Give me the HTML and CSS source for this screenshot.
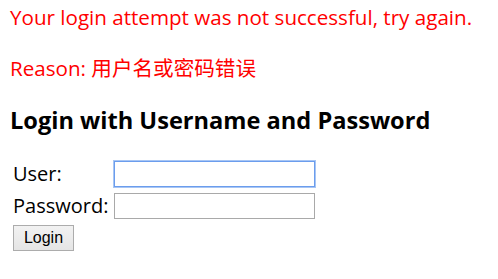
FILE: index.html
```html
<!DOCTYPE html>
<html lang="en">
<head>
<meta charset="utf-8">
<title>Login Page</title>
<link rel="stylesheet" href="styles.css">
</head>
<body>
<div class="page">
  <div class="error">
    <div class="line">Your login attempt was not successful, try again.</div>
    <div class="line gap">Reason: 用户名或密码错误</div>
  </div>
  <h3 class="title">Login with Username and Password</h3>
  <form class="form">
    <label class="label" for="u">User:</label>
    <input class="field focused" id="u" type="text">
    <label class="label" for="p">Password:</label>
    <input class="field" id="p" type="password">
    <div class="actions"><button class="btn" type="button">Login</button></div>
  </form>
</div>
</body>
</html>
```
FILE: styles.css
```css
html, body {
  margin: 0;
  padding: 0;
  background: #ffffff;
}
.page {
  padding: 0 0 0 10px;
  font-family: "Open Sans", "Noto Sans CJK SC", sans-serif;
  font-size: 20.6px;
  color: #000;
}
.error {
  color: #ff0000;
  padding-top: 4px;
}
.line {
  line-height: 26px;
}
.gap {
  margin-top: 25px;
}
.title {
  margin: 24px 0 0 0;
  font-size: 23.6px;
  line-height: 30px;
  font-weight: bold;
}
.form {
  margin-top: 26px;
  display: grid;
  grid-template-columns: max-content 201px;
  justify-content: start;
  column-gap: 6px;
  row-gap: 6px;
  align-items: center;
  padding-left: 3px;
}
.label {
  font-size: 20px;
  line-height: 26px;
}
.field {
  box-sizing: border-box;
  width: 201px;
  height: 26px;
  margin: 0;
  border: 1px solid #a9a9a9;
  background: #fff;
  padding: 0 2px;
}
.focused {
  border: 1px solid #6b9ded;
  box-shadow: 0 0 0 1px #a8c6f4;
}
.actions {
  grid-column: 1 / 3;
  display: flex;
}
.btn {
  box-sizing: border-box;
  width: 61px;
  height: 26px;
  margin: 0;
  padding: 0;
  border: 1px solid #acacac;
  border-radius: 0;
  background: linear-gradient(#f2f2f2, #e5e5e5);
  font-family: "Liberation Sans", Arial, sans-serif;
  font-size: 16px;
  color: #000;
}
```
